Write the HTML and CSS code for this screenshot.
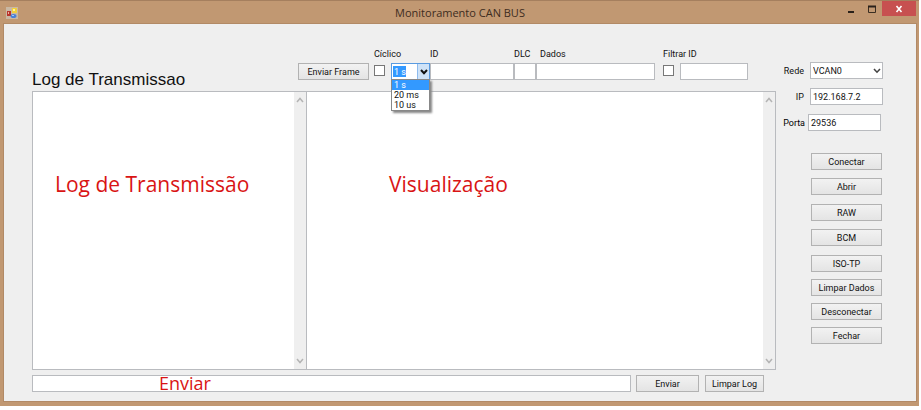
FILE: index.html
```html
<!DOCTYPE html>
<html lang="pt-BR">
<head>
<meta charset="utf-8">
<title>Monitoramento CAN BUS</title>
<link rel="stylesheet" href="styles.css">
</head>
<body>
<div class="window">
  <header class="titlebar">
    <svg class="app-icon" viewBox="0 0 12 12" aria-hidden="true">
      <rect x="0" y="0" width="12" height="12" fill="#c9b8a4"/>
      <rect x="1" y="4" width="4" height="5" fill="#b8352c"/>
      <rect x="2" y="5" width="1" height="2" fill="#f0b0a0"/>
      <rect x="6" y="1" width="5" height="5" fill="#f2cf3a"/>
      <rect x="7" y="2" width="2" height="2" fill="#fff3a0"/>
      <ellipse cx="7.500" cy="9" rx="3" ry="2" fill="#4a80d8"/>
      <rect x="6" y="8" width="2" height="1" fill="#a8c8f4"/>
    </svg>
    <h1 class="title">Monitoramento CAN BUS</h1>
    <div class="window-buttons">
      <button class="wbtn" type="button" aria-label="Minimizar"><svg viewBox="0 0 8 8"><path d="M1 7h6" stroke="#2a211a" stroke-width="2"/></svg></button>
      <button class="wbtn" type="button" aria-label="Maximizar"><svg viewBox="0 0 8 8"><path d="M.5 1.500h7v6h-7z" fill="none" stroke="#3a2e22"/><path d="M0 1.500h8" stroke="#2a211a" stroke-width="2"/></svg></button>
      <button class="wbtn wbtn-close" type="button" aria-label="Fechar janela"><svg viewBox="0 0 8 8"><path d="M1.500 1l5 6M6.500 1l-5 6" stroke="#fff" stroke-width="1.600"/></svg></button>
    </div>
  </header>

  <div class="client">
    <main class="main">
      <div class="toolbar">
        <h2 class="heading">Log de Transmissao</h2>
        <button class="btn" type="button">Enviar Frame</button>
        <div class="field field-check">
          <label for="ciclico">Cíclico</label>
          <input id="ciclico" class="check" type="checkbox">
        </div>
        <div class="frame-fields">
          <div class="combo">
            <select class="combo-select" aria-label="Intervalo">
              <option>1 s</option><option>20 ms</option><option>10 us</option>
            </select>
            <span class="combo-arrow"><svg viewBox="0 0 8 6"><path d="M1 1l3 3.200L7 1" fill="none" stroke="#111" stroke-width="2"/></svg></span>
            <ul class="combo-list">
              <li class="selected">1 s</li>
              <li>20 ms</li>
              <li>10 us</li>
            </ul>
          </div>
          <div class="field field-id"><label for="id">ID</label><input id="id" class="text" type="text"></div>
          <div class="field field-dlc"><label for="dlc">DLC</label><input id="dlc" class="text" type="text"></div>
          <div class="field field-data"><label for="dados">Dados</label><input id="dados" class="text" type="text"></div>
        </div>
        <div class="filter">
          <div class="field field-check">
            <label for="filtrar">Filtrar ID</label>
            <input id="filtrar" class="check" type="checkbox">
          </div>
          <input class="text filter-text" type="text" aria-label="ID a filtrar">
        </div>
      </div>

      <div class="panels">
        <section class="panel">
          <textarea class="log" readonly aria-label="Log de Transmissão"></textarea>
          <div class="scrollbar">
            <svg viewBox="0 0 8 6"><path d="M1 5l3-3.500L7 5" fill="none" stroke="#b4b4b4" stroke-width="1.500"/></svg>
            <svg viewBox="0 0 8 6"><path d="M1 1l3 3.500L7 1" fill="none" stroke="#b4b4b4" stroke-width="1.500"/></svg>
          </div>
          <span class="note note-log">Log de Transmissão</span>
        </section>
        <section class="panel">
          <textarea class="log" readonly aria-label="Visualização"></textarea>
          <div class="scrollbar">
            <svg viewBox="0 0 8 6"><path d="M1 5l3-3.500L7 5" fill="none" stroke="#b4b4b4" stroke-width="1.500"/></svg>
            <svg viewBox="0 0 8 6"><path d="M1 1l3 3.500L7 1" fill="none" stroke="#b4b4b4" stroke-width="1.500"/></svg>
          </div>
          <span class="note note-view">Visualização</span>
        </section>
      </div>

      <div class="sendbar">
        <div class="send-box">
          <input class="text" type="text" aria-label="Mensagem">
          <span class="note note-send">Enviar</span>
        </div>
        <button class="btn btn-send" type="button">Enviar</button>
        <button class="btn btn-clear" type="button">Limpar Log</button>
      </div>
    </main>

    <aside class="side">
      <div class="row">
        <label for="rede">Rede</label>
        <div class="net">
          <select id="rede" class="net-select"><option>VCAN0</option></select>
          <svg class="net-arrow" viewBox="0 0 8 6"><path d="M1 1l3 3.200L7 1" fill="none" stroke="#444" stroke-width="1.600"/></svg>
        </div>
      </div>
      <div class="row"><label for="ip">IP</label><input id="ip" class="text" type="text" value="192.168.7.2"></div>
      <div class="row row-port"><label for="porta">Porta</label><input id="porta" class="text" type="text" value="29536"></div>
      <div class="actions">
        <div class="group">
          <button class="btn" type="button">Conectar</button>
          <button class="btn" type="button">Abrir</button>
        </div>
        <div class="group">
          <button class="btn" type="button">RAW</button>
          <button class="btn" type="button">BCM</button>
        </div>
        <div class="group group-tight">
          <button class="btn" type="button">ISO-TP</button>
          <button class="btn" type="button">Limpar Dados</button>
          <button class="btn" type="button">Desconectar</button>
          <button class="btn" type="button">Fechar</button>
        </div>
      </div>
    </aside>
  </div>
</div>
</body>
</html>
```
FILE: styles.css
```css
* { box-sizing: border-box; }

body {
  margin: 0;
  padding: 0 2px 4px 0;
  min-height: 100vh;
  display: flex;
  background: #fff;
  color: #111;
  font: 9px/12px Roboto, "Liberation Sans", sans-serif;
}

button, input, select, textarea { font: inherit; color: inherit; margin: 0; border-radius: 0; }

/* Window frame */
.window {
  flex: 1;
  display: flex;
  flex-direction: column;
  background: #c19872;
  border-top: 1px solid #a57f5e;
  padding: 0 3px 5px 4px;
}
.titlebar {
  height: 23px;
  display: grid;
  grid-template-columns: 1fr auto 1fr;
  align-items: center;
}
.app-icon { width: 12px; height: 12px; margin-left: 2px; }
.title {
  margin: 0;
  font: 11px/16px "Open Sans", "Noto Sans", sans-serif;
  color: #3d2c1e;
}
.window-buttons { align-self: start; justify-self: end; display: flex; }
.wbtn {
  width: 21px;
  height: 15px;
  padding: 0;
  border: 0;
  background: none;
  display: flex;
  align-items: center;
  justify-content: center;
}
.wbtn svg { width: 8px; height: 8px; }
.wbtn-close { width: 34px; background: #c75050; }

.client {
  flex: 1;
  display: flex;
  gap: 7px;
  padding: 0 33px 9px 28px;
  background: #efefef;
  outline: 1px solid #b28a66;
}
.main { flex: 1; min-width: 0; display: flex; flex-direction: column; }

/* Shared controls */
.btn {
  height: 17px;
  padding: 0;
  border: 1px solid #b2b2b2;
  background: linear-gradient(#f2f2f2, #e4e4e4);
  white-space: nowrap;
  text-align: center;
}
.text {
  width: 100%;
  min-width: 0;
  height: 17px;
  padding: 0 2px;
  border: 1px solid #b9bbbf;
  background: #fff;
}
.check {
  appearance: none;
  width: 11px;
  height: 11px;
  border: 1px solid #777;
  background: #fff;
}

/* Toolbar */
.toolbar {
  height: 67px;
  padding: 0 28px 11px 0;
  display: flex;
  align-items: flex-end;
}
.heading {
  flex: 1;
  margin: 0 0 -10px;
  font: 17px/20px "Liberation Sans", sans-serif;
  color: #111;
  white-space: nowrap;
}
.toolbar > .btn { width: 71px; margin-right: 5px; }
.field { display: flex; flex-direction: column; gap: 3px; white-space: nowrap; }
.field-check { width: 17px; gap: 5px; padding-bottom: 4px; }
.frame-fields { display: flex; align-items: flex-end; margin-right: 8px; }
.field-id { width: 84px; }
.field-dlc { width: 22px; }
.field-data { width: 119px; }
.field-data label { padding-left: 4px; }
.filter { display: flex; align-items: flex-end; }
.filter-text { width: 68px; }

.combo { position: relative; width: 39px; height: 17px; }
.combo-select {
  appearance: none;
  display: block;
  width: 100%;
  height: 100%;
  padding: 0 2px;
  border: 1px solid #5a9be0;
  background: linear-gradient(#3399ff, #3399ff) 1px 2px / 13px 11px no-repeat #fff;
  color: #fff;
}
.combo-arrow {
  position: absolute;
  top: 1px;
  right: 1px;
  bottom: 1px;
  width: 12px;
  display: flex;
  align-items: center;
  justify-content: center;
  background: #cfe3f8;
  border-left: 1px solid #8dbbee;
  pointer-events: none;
}
.combo-arrow svg { width: 8px; height: 6px; }
.combo-list {
  position: absolute;
  z-index: 2;
  top: 16px;
  left: 0;
  width: 39px;
  margin: 0;
  padding: 0;
  list-style: none;
  border: 1px solid #888;
  background: #fff;
  box-shadow: 2px 2px 2px #888;
  line-height: 10px;
}
.combo-list li { padding: 0 2px; }
.combo-list .selected { background: #3399ff; color: #fff; }

/* Log panels */
.panels { flex: 1; display: grid; grid-template-columns: 275fr 469fr; }
.panel {
  position: relative;
  display: flex;
  border: 1px solid #b9bbbf;
  background: #fff;
}
.panel + .panel { border-left-width: 0; }
.log { flex: 1; min-width: 0; border: 0; padding: 2px; background: #fff; resize: none; outline: 0; }
.scrollbar {
  width: 12px;
  padding: 5px 2px;
  display: flex;
  flex-direction: column;
  justify-content: space-between;
  background: #efefef;
}
.scrollbar svg { width: 8px; height: 6px; }

/* Red captions laid over the areas */
.note {
  position: absolute;
  font: 21px/26px "Open Sans", "Noto Sans", sans-serif;
  color: #d91414;
  white-space: nowrap;
  pointer-events: none;
}
.note-log { left: 22px; top: 79px; }
.note-view { left: 82px; top: 79px; }
.note-send { left: 127px; top: -2px; font-size: 18px; line-height: 20px; }

/* Send bar */
.sendbar { display: flex; padding-top: 5px; }
.send-box { position: relative; flex: 1; display: flex; margin-right: 5px; }
.btn-send { width: 63px; margin-right: 6px; }
.btn-clear { width: 59px; margin-right: 12px; }

/* Connection settings */
.side {
  width: 100px;
  padding-top: 38px;
  display: flex;
  flex-direction: column;
  gap: 9px;
}
.row { display: flex; align-items: center; gap: 6px; }
.row label { flex: 1; text-align: right; }
.row .text { width: 73px; flex: none; }
.row-port { gap: 3px; padding-right: 2px; }
.row-port label { color: #000; }
.net { position: relative; flex: none; width: 73px; }
.net-select {
  appearance: none;
  display: block;
  width: 100%;
  height: 17px;
  padding: 0 2px;
  border: 1px solid #b9bbbf;
  background: #fff;
}
.net-arrow { position: absolute; right: 2px; top: 6px; width: 8px; height: 6px; pointer-events: none; }

.actions { display: flex; flex-direction: column; gap: 9px; padding: 13px 1px 0 28px; }
.group { display: flex; flex-direction: column; gap: 8px; }
.group-tight { gap: 7px; }
```
